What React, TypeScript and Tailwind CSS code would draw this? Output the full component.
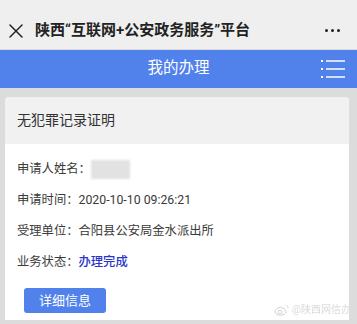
import { X } from "lucide-react";

const ROWS = [
  { label: "申请人姓名：", value: null },
  { label: "申请时间：", value: "2020-10-10 09:26:21" },
  { label: "受理单位：", value: "合阳县公安局金水派出所" },
];

const MenuIcon = () => (
  <svg width="24" height="18" viewBox="0 0 24 18" fill="none">
    {[1, 9, 17].map((y) => (
      <g key={y}>
        <rect x="0" y={y - 1} width="2" height="2" fill="white" />
        <rect x="5" y={y - 0.75} width="19" height="1.5" fill="white" />
      </g>
    ))}
  </svg>
);

const WeiboMark = () => (
  <svg width="16" height="12" viewBox="0 0 16 12" fill="none">
    <path
      d="M6.5 3.2C3.6 3.6 1 5.8 1 7.8c0 2 2.5 3.4 5.4 3.4 3.3 0 5.6-1.7 5.6-3.4 0-1.1-1-1.5-1.6-1.7.4-.9.3-1.9-1-1.8-.8 0-1.4.4-1.4.4.3-1-.3-1.7-1.5-1.5Z"
      stroke="#d0d0d0"
      strokeWidth="1"
    />
    <ellipse cx="6" cy="8" rx="2.2" ry="1.6" stroke="#d0d0d0" strokeWidth="0.9" />
    <path d="M11.5 1.2c1.6.2 2.7 1.4 2.6 3" stroke="#d0d0d0" strokeWidth="0.9" />
  </svg>
);

export default function App() {
  return (
    <div
      className="relative w-[357px] h-[324px] overflow-hidden bg-[#dcdcdc]"
      style={{ fontFamily: 'Roboto, "Noto Sans CJK SC", sans-serif' }}
    >
      <div className="h-[50px] pt-3 bg-[#efefef] border-b border-[#dadada] flex items-center">
        <X className="ml-[4px] text-[#222]" size={24} strokeWidth={1.5} />
        <span className="ml-[7px] text-[15px] font-semibold text-[#222]">
          陕西“互联网+公安政务服务”平台
        </span>
        <div className="ml-auto mr-[17px] flex gap-[3px]">
          <span className="w-[3px] h-[3px] rounded-full bg-[#222]" />
          <span className="w-[3px] h-[3px] rounded-full bg-[#222]" />
          <span className="w-[3px] h-[3px] rounded-full bg-[#222]" />
        </div>
      </div>

      <div className="relative h-[38px] bg-[#5182ec] flex items-center justify-center">
        <span className="text-white text-[15.5px]">我的办理</span>
        <div className="absolute right-[12px] top-[10px]">
          <MenuIcon />
        </div>
      </div>

      <div className="mt-[9px] ml-[5px] mr-[8px] rounded-t-[4px] overflow-hidden bg-white">
        <div className="h-[47px] bg-[#f1f1f1] px-[12px] flex items-center text-[14px] text-[#333]">
          无犯罪记录证明
        </div>
        <div className="px-[12px] pt-[10px] pb-[7px] text-[12.3px] text-[#3a3a3a]">
          {ROWS.map((row) => (
            <div key={row.label} className="h-[31px] flex items-center">
              <span>{row.label}</span>
              {row.value === null ? (
                <span className="w-[39px] h-[19px] bg-[#e2e2e2] blur-[1px]" />
              ) : (
                <span>{row.value}</span>
              )}
            </div>
          ))}
          <div className="h-[31px] flex items-center">
            <span>业务状态：</span>
            <span className="text-[#2a35c9] font-medium">办理完成</span>
          </div>
          <button className="mt-[10px] ml-[7px] w-[82px] h-[25px] rounded-[3px] bg-[#5182ec] text-white text-[13px] flex items-center justify-center">
            详细信息
          </button>
        </div>
      </div>

      <div className="absolute left-[274px] top-[302px] flex items-center gap-[2px] text-[10px] text-[#dadada] blur-[0.5px]">
        <WeiboMark />
        <span>@陕西网信办</span>
      </div>
    </div>
  );
}
